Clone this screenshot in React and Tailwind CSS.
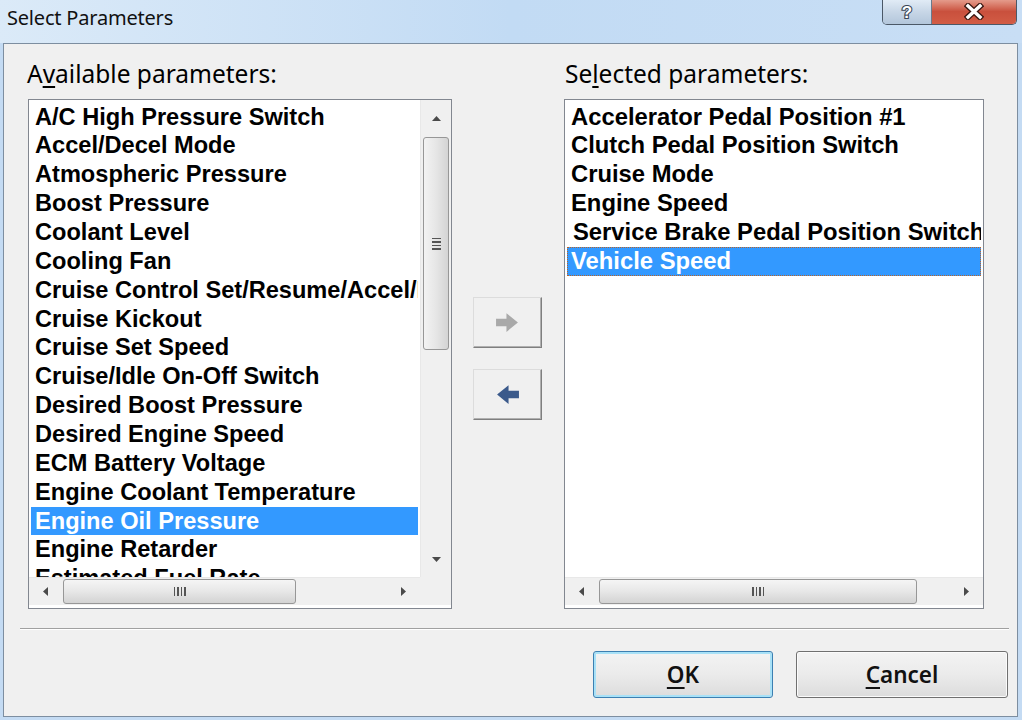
import React from "react";

const LEFT = [
  "A/C High Pressure Switch",
  "Accel/Decel Mode",
  "Atmospheric Pressure",
  "Boost Pressure",
  "Coolant Level",
  "Cooling Fan",
  "Cruise Control Set/Resume/Accel/Decel",
  "Cruise Kickout",
  "Cruise Set Speed",
  "Cruise/Idle On-Off Switch",
  "Desired Boost Pressure",
  "Desired Engine Speed",
  "ECM Battery Voltage",
  "Engine Coolant Temperature",
  "Engine Oil Pressure",
  "Engine Retarder",
  "Estimated Fuel Rate",
];

const RIGHT = [
  "Accelerator Pedal Position #1",
  "Clutch Pedal Position Switch",
  "Cruise Mode",
  "Engine Speed",
  "Service Brake Pedal Position Switch",
  "Vehicle Speed",
];

function Tri({ dir }) {
  const pts = {
    up: "0,5 4.5,0 9,5",
    down: "0,0 9,0 4.5,5",
    left: "5,0 5,9 0,4.5",
    right: "0,0 0,9 5,4.5",
  }[dir];
  const vert = dir === "up" || dir === "down";
  return (
    <svg width={vert ? 9 : 5} height={vert ? 5 : 9} viewBox={vert ? "0 0 9 5" : "0 0 5 9"}>
      <polygon points={pts} fill="#4a4a4a" />
    </svg>
  );
}

function VScroll() {
  return (
    <div className="w-[31px] flex flex-col bg-[#f0f0f0] border-l border-[#e8e8e8]">
      <div className="h-[37px] flex items-center justify-center">
        <Tri dir="up" />
      </div>
      <div className="mx-[2px] h-[213px] rounded-[3px] border border-[#979797] bg-gradient-to-r from-[#f3f3f3] via-[#e6e6e6] to-[#d4d4d4] flex items-center justify-center">
        <div className="flex flex-col gap-[2px]">
          <div className="w-[9px] h-[1.5px] bg-[#555]" />
          <div className="w-[9px] h-[1.5px] bg-[#555]" />
          <div className="w-[9px] h-[1.5px] bg-[#555]" />
          <div className="w-[9px] h-[1.5px] bg-[#555]" />
        </div>
      </div>
      <div className="flex-1" />
      <div className="h-[35px] flex items-center justify-center">
        <Tri dir="down" />
      </div>
    </div>
  );
}

function HScroll({ thumbW }) {
  return (
    <div className="h-[28px] flex flex-row bg-[#f0f0f0] border-t border-[#e8e8e8] flex-1">
      <div className="w-[33px] flex items-center justify-center">
        <Tri dir="left" />
      </div>
      <div
        className="mt-[1px] h-[25px] ml-[1px] rounded-[3px] border border-[#979797] bg-gradient-to-b from-[#f5f5f5] via-[#e7e7e7] to-[#d3d3d3] flex items-center justify-center"
        style={{ width: thumbW }}
      >
        <div className="flex flex-row gap-[2px]">
          <div className="w-[1.5px] h-[9px] bg-[#555]" />
          <div className="w-[1.5px] h-[9px] bg-[#555]" />
          <div className="w-[1.5px] h-[9px] bg-[#555]" />
          <div className="w-[1.5px] h-[9px] bg-[#555]" />
        </div>
      </div>
      <div className="flex-1" />
      <div className="w-[33px] flex items-center justify-center">
        <Tri dir="right" />
      </div>
    </div>
  );
}

function Item({ text, selected, focus, shift }) {
  return (
    <div
      className={
        "h-[28.87px] leading-[28.87px] pl-[4px] whitespace-nowrap overflow-hidden " +
        (selected ? "bg-[#3399ff] text-white " : "text-black ") +
        (focus ? "outline-1 outline-dotted outline-[#b8642a] -outline-offset-1 " : "")
      }
    >
      <span className={shift ? "ml-[2px]" : ""}>{text}</span>
    </div>
  );
}

const listFont = { fontFamily: '"Liberation Sans", Arial, sans-serif' };

function Arrow({ dir, color }) {
  return (
    <svg width="25" height="23" viewBox="0 0 24 22">
      {dir === "right" ? (
        <polygon points="1,7.5 11,7.5 11,2 22,11 11,20 11,14.5 1,14.5" fill={color} />
      ) : (
        <polygon points="23,7.5 13,7.5 13,2 2,11 13,20 13,14.5 23,14.5" fill={color} />
      )}
    </svg>
  );
}

export default function App() {
  return (
    <div
      className="w-[1022px] h-[720px] overflow-hidden flex flex-col bg-[#c4dbf3]"
      style={{ fontFamily: '"Noto Sans", "Open Sans", sans-serif' }}
    >
      {/* title bar */}
      <div className="h-[43px] flex flex-row items-start bg-gradient-to-r from-[#dbeaf8] via-[#c2dbf4] to-[#c8def5]">
        <div className="pl-[7px] pt-[6px] text-[20px] leading-[24px] text-[#111] tracking-[-0.2px]">
          Select Parameters
        </div>
        <div className="ml-auto mr-[5px] -mt-[1px] flex flex-row h-[26px] rounded-b-[5px] border border-t-0 border-[#4b5867] overflow-hidden">
          <div className="w-[49px] flex items-center justify-center bg-gradient-to-b from-[#e3edf7] via-[#c8d7e7] to-[#b3c6db] border-r border-[#6a7a8c]">
            <svg width="16" height="20" viewBox="0 0 16 20">
              <text
                x="8"
                y="16"
                textAnchor="middle"
                fontFamily="Liberation Sans, Arial, sans-serif"
                fontWeight="700"
                fontSize="17"
                fill="#ffffff"
                stroke="#3a4656"
                strokeWidth="2.2"
                paintOrder="stroke"
              >
                ?
              </text>
            </svg>
          </div>
          <div className="w-[84px] flex items-center justify-center bg-gradient-to-b from-[#e6a192] via-[#c9503d] to-[#d25c45]">
            <svg width="20" height="17" viewBox="0 0 20 17">
              <path d="M4 3 L16 14 M16 3 L4 14" stroke="#3a1812" strokeWidth="6" strokeLinecap="square" />
              <path d="M4 3 L16 14 M16 3 L4 14" stroke="#ffffff" strokeWidth="3.4" strokeLinecap="square" />
            </svg>
          </div>
        </div>
      </div>

      {/* client area */}
      <div className="ml-[3px] mr-[4px] h-[674px] border border-[#7d8ea0] bg-[#f0f0f0] flex flex-col">
        <div className="flex flex-row pl-[24px]">
          {/* left column */}
          <div className="w-[424px] flex flex-col">
            <div className="h-[55px] pt-[16px] text-[24.5px] leading-[28px] text-black -ml-[1px]">
              A<span className="underline underline-offset-[3px]">v</span>ailable parameters:
            </div>
            <div className="h-[510px] border border-[#828790] bg-white flex flex-col">
              <div className="h-[477px] flex flex-row">
                <div className="flex-1 overflow-hidden px-[2px] pt-[2.6px] text-[23.6px] font-bold" style={listFont}>
                  {LEFT.map((t, i) => (
                    <Item key={t} text={t} selected={i === 14} />
                  ))}
                </div>
                <VScroll />
              </div>
              <div className="flex flex-row">
                <HScroll thumbW={233} />
                <div className="w-[31px] h-[28px] bg-[#f0f0f0]" />
              </div>
            </div>
          </div>

          {/* middle buttons */}
          <div className="w-[112px] flex flex-col pt-[253px] pl-[21px] gap-[21px]">
            <div className="w-[69px] h-[51px] flex items-center justify-center bg-[#f0f0f0] border border-t-[#dcdcdc] border-l-[#dcdcdc] border-r-[#7f7f7f] border-b-[#7f7f7f] shadow-[inset_-1px_-1px_0_#b0b0b0]">
              <Arrow dir="right" color="#a9a9a9" />
            </div>
            <div className="w-[69px] h-[51px] flex items-center justify-center bg-[#f0f0f0] border border-t-[#dcdcdc] border-l-[#dcdcdc] border-r-[#7f7f7f] border-b-[#7f7f7f] shadow-[inset_-1px_-1px_0_#b0b0b0]">
              <Arrow dir="left" color="#3b5a8b" />
            </div>
          </div>

          {/* right column */}
          <div className="w-[420px] flex flex-col">
            <div className="h-[55px] pt-[16px] text-[24.5px] leading-[28px] text-black ml-[1px]">
              Se<span className="underline underline-offset-[3px]">l</span>ected parameters:
            </div>
            <div className="h-[510px] border border-[#828790] bg-white flex flex-col">
              <div className="h-[477px] overflow-hidden px-[2px] pt-[2.6px] text-[23.8px] font-bold" style={listFont}>
                {RIGHT.map((t, i) => (
                  <Item key={t} text={t} selected={i === 5} focus={i === 5} shift={i === 4} />
                ))}
              </div>
              <div className="flex flex-row">
                <HScroll thumbW={318} />
              </div>
            </div>
          </div>
        </div>

        {/* separator */}
        <div className="mt-[19px] ml-[16px] mr-[8px] h-[2px] border-t border-[#a0a0a0] border-b border-b-white" />

        {/* buttons */}
        <div className="mt-[21px] flex flex-row justify-end gap-[23px] pr-[9px]">
          <div className="w-[180px] h-[47px] rounded-[3px] border border-[#3c7fb1] shadow-[inset_0_0_0_2px_#a8e1f7] bg-gradient-to-b from-[#f3f3f3] via-[#ebebeb] to-[#dcdcdc] flex items-center justify-center text-[22.5px] font-semibold text-[#111]">
            <span className="underline underline-offset-[4px]">O</span>K
          </div>
          <div className="w-[212px] h-[47px] rounded-[3px] border border-[#707070] shadow-[inset_0_0_0_1px_#fbfbfb] bg-gradient-to-b from-[#f3f3f3] via-[#ebebeb] to-[#dcdcdc] flex items-center justify-center text-[22.5px] font-semibold text-[#111]">
            <span className="underline underline-offset-[4px]">C</span>ancel
          </div>
        </div>
      </div>
    </div>
  );
}
